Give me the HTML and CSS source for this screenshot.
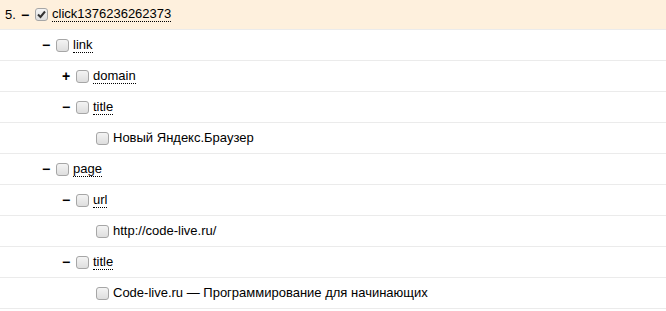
FILE: index.html
```html
<!DOCTYPE html>
<html>
<head>
<meta charset="utf-8">
<link rel="stylesheet" href="styles.css">
</head>
<body>
<div class="tree">
  <div class="row row-active d0">
    <span class="num">5.</span>
    <span class="toggle">&minus;</span>
    <span class="cb checked"><svg viewBox="0 0 13 13" width="13" height="13"><path d="M3 6.5 L5.5 9 L10 3.5" fill="none" stroke="#333" stroke-width="2"/></svg></span>
    <span class="name">click1376236262373</span>
  </div>
  <div class="row d1">
    <span class="toggle">&minus;</span><span class="cb"></span><span class="name">link</span>
  </div>
  <div class="row d2">
    <span class="toggle">+</span><span class="cb"></span><span class="name">domain</span>
  </div>
  <div class="row d2">
    <span class="toggle">&minus;</span><span class="cb"></span><span class="name">title</span>
  </div>
  <div class="row d3">
    <span class="toggle"></span><span class="cb"></span><span class="value">Новый Яндекс.Браузер</span>
  </div>
  <div class="row d1">
    <span class="toggle">&minus;</span><span class="cb"></span><span class="name">page</span>
  </div>
  <div class="row d2">
    <span class="toggle">&minus;</span><span class="cb"></span><span class="name">url</span>
  </div>
  <div class="row d3">
    <span class="toggle"></span><span class="cb"></span><span class="value">http://code-live.ru/</span>
  </div>
  <div class="row d2">
    <span class="toggle">&minus;</span><span class="cb"></span><span class="name">title</span>
  </div>
  <div class="row d3">
    <span class="toggle"></span><span class="cb"></span><span class="value">Code-live.ru — Программирование для начинающих</span>
  </div>
</div>
</body>
</html>
```

FILE: styles.css
```css
html, body {
  margin: 0;
  padding: 0;
  background: #fff;
}
body {
  font-family: "Liberation Sans", Arial, sans-serif;
  font-size: 13px;
  color: #000;
}
.tree {
  display: flex;
  flex-direction: column;
}
.row {
  display: flex;
  align-items: center;
  height: 30px;
  border-bottom: 1px solid #ebebeb;
  box-sizing: content-box;
}
.row-active {
  background: #fef0dd;
  height: 29px;
}
.d0 { padding-left: 5px; }
.d1 { padding-left: 40px; }
.d2 { padding-left: 60px; }
.d3 { padding-left: 80px; }
.num {
  width: 14px;
}
.toggle {
  width: 16px;
  font-weight: bold;
  font-size: 14px;
  line-height: 1;
  padding-left: 2px;
  box-sizing: border-box;
}
.cb {
  width: 13px;
  height: 13px;
  box-sizing: border-box;
  border: 1px solid #a6a6a6;
  border-radius: 3px;
  background: linear-gradient(#f4f4f4, #dedede);
  margin-right: 4px;
  position: relative;
}
.cb svg {
  position: absolute;
  left: -1px;
  top: -1px;
}
.name {
  border-bottom: 1px dotted #000;
  line-height: 14px;
}
.value {
  line-height: 14px;
}
```
